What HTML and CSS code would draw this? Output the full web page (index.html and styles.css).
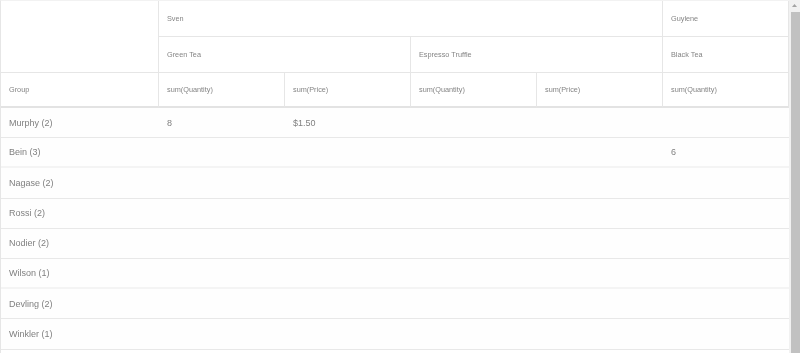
FILE: index.html
```html
<!DOCTYPE html>
<html>
<head>
<meta charset="utf-8">
<link rel="stylesheet" href="styles.css">
</head>
<body>
<div class="frame">
  <div class="pivot">
    <div class="head">
      <div class="hc corner"></div>
      <div class="hc span4">Sven</div>
      <div class="hc">Guylene</div>
      <div class="hc span2">Green Tea</div>
      <div class="hc span2">Espresso Truffle</div>
      <div class="hc">Black Tea</div>
      <div class="hc r3">Group</div>
      <div class="hc r3">sum(Quantity)</div>
      <div class="hc r3">sum(Price)</div>
      <div class="hc r3">sum(Quantity)</div>
      <div class="hc r3">sum(Price)</div>
      <div class="hc r3">sum(Quantity)</div>
    </div>
    <div class="body">
      <div class="row"><div class="c">Murphy (2)</div><div class="c">8</div><div class="c">$1.50</div><div class="c"></div><div class="c"></div><div class="c"></div></div>
      <div class="row soft"><div class="c">Bein (3)</div><div class="c"></div><div class="c"></div><div class="c"></div><div class="c"></div><div class="c">6</div></div>
      <div class="row"><div class="c">Nagase (2)</div><div class="c"></div><div class="c"></div><div class="c"></div><div class="c"></div><div class="c"></div></div>
      <div class="row"><div class="c">Rossi (2)</div><div class="c"></div><div class="c"></div><div class="c"></div><div class="c"></div><div class="c"></div></div>
      <div class="row"><div class="c">Nodier (2)</div><div class="c"></div><div class="c"></div><div class="c"></div><div class="c"></div><div class="c"></div></div>
      <div class="row soft"><div class="c">Wilson (1)</div><div class="c"></div><div class="c"></div><div class="c"></div><div class="c"></div><div class="c"></div></div>
      <div class="row"><div class="c">Devling (2)</div><div class="c"></div><div class="c"></div><div class="c"></div><div class="c"></div><div class="c"></div></div>
      <div class="row"><div class="c">Winkler (1)</div><div class="c"></div><div class="c"></div><div class="c"></div><div class="c"></div><div class="c"></div></div>
    </div>
  </div>
  <div class="scrollbar">
    <div class="arrow"><svg width="11" height="11" viewBox="0 0 11 11"><path d="M3 7 L5.5 4 L8 7 Z" fill="#a3a3a3"/></svg></div>
    <div class="thumb"></div>
  </div>
</div>
</body>
</html>
```
FILE: styles.css
```css
html, body {
  margin: 0;
  padding: 0;
  background: #ffffff;
}
body {
  font-family: "Liberation Sans", Arial, sans-serif;
  overflow: hidden;
  -webkit-font-smoothing: antialiased;
}
.frame {
  display: flex;
  width: 800px;
  height: 353px;
  overflow: hidden;
}
.pivot {
  width: 789px;
  border-left: 1px solid #e6e6e6;
  box-sizing: border-box;
  border-top: 1px solid #f2f2f2;
}
.head {
  display: grid;
  grid-template-columns: 158px repeat(5, 126px);
  grid-template-rows: 36px 36px 35px;
  will-change: transform;
  background: #ffffff;
}
.body {
  will-change: transform;
  background: #fefefe;
}
.hc {
  box-sizing: border-box;
  border-right: 1px solid #e6e6e6;
  border-bottom: 1px solid #e6e6e6;
  font-size: 7.3px;
  color: #858585;
  padding-left: 8px;
  display: flex;
  align-items: center;
}
.corner {
  grid-row: span 2;
}
.span4 { grid-column: span 4; }
.span2 { grid-column: span 2; }
.hc.r3 {
  border-bottom: 2px solid #e3e3e3;
}
.row {
  display: grid;
  grid-template-columns: 158px repeat(5, 126px);
  height: 30.2px;
  box-sizing: border-box;
  border-bottom: 1px solid #e8e8e8;
  background: #fefefe;
}
.row.soft {
  border-bottom: 2px solid #f4f4f4;
}
.c {
  font-size: 9px;
  color: #808080;
  padding-left: 8px;
  display: flex;
  align-items: center;
}
.scrollbar {
  width: 11px;
  flex: none;
  background: #f1f1f1;
  display: flex;
  flex-direction: column;
  align-items: center;
}
.arrow {
  height: 11px;
  flex: none;
  display: flex;
}
.thumb {
  width: 9px;
  margin-left: 1px;
  flex: 1;
  background: #c1c1c1;
  margin-top: 1px;
}
```
